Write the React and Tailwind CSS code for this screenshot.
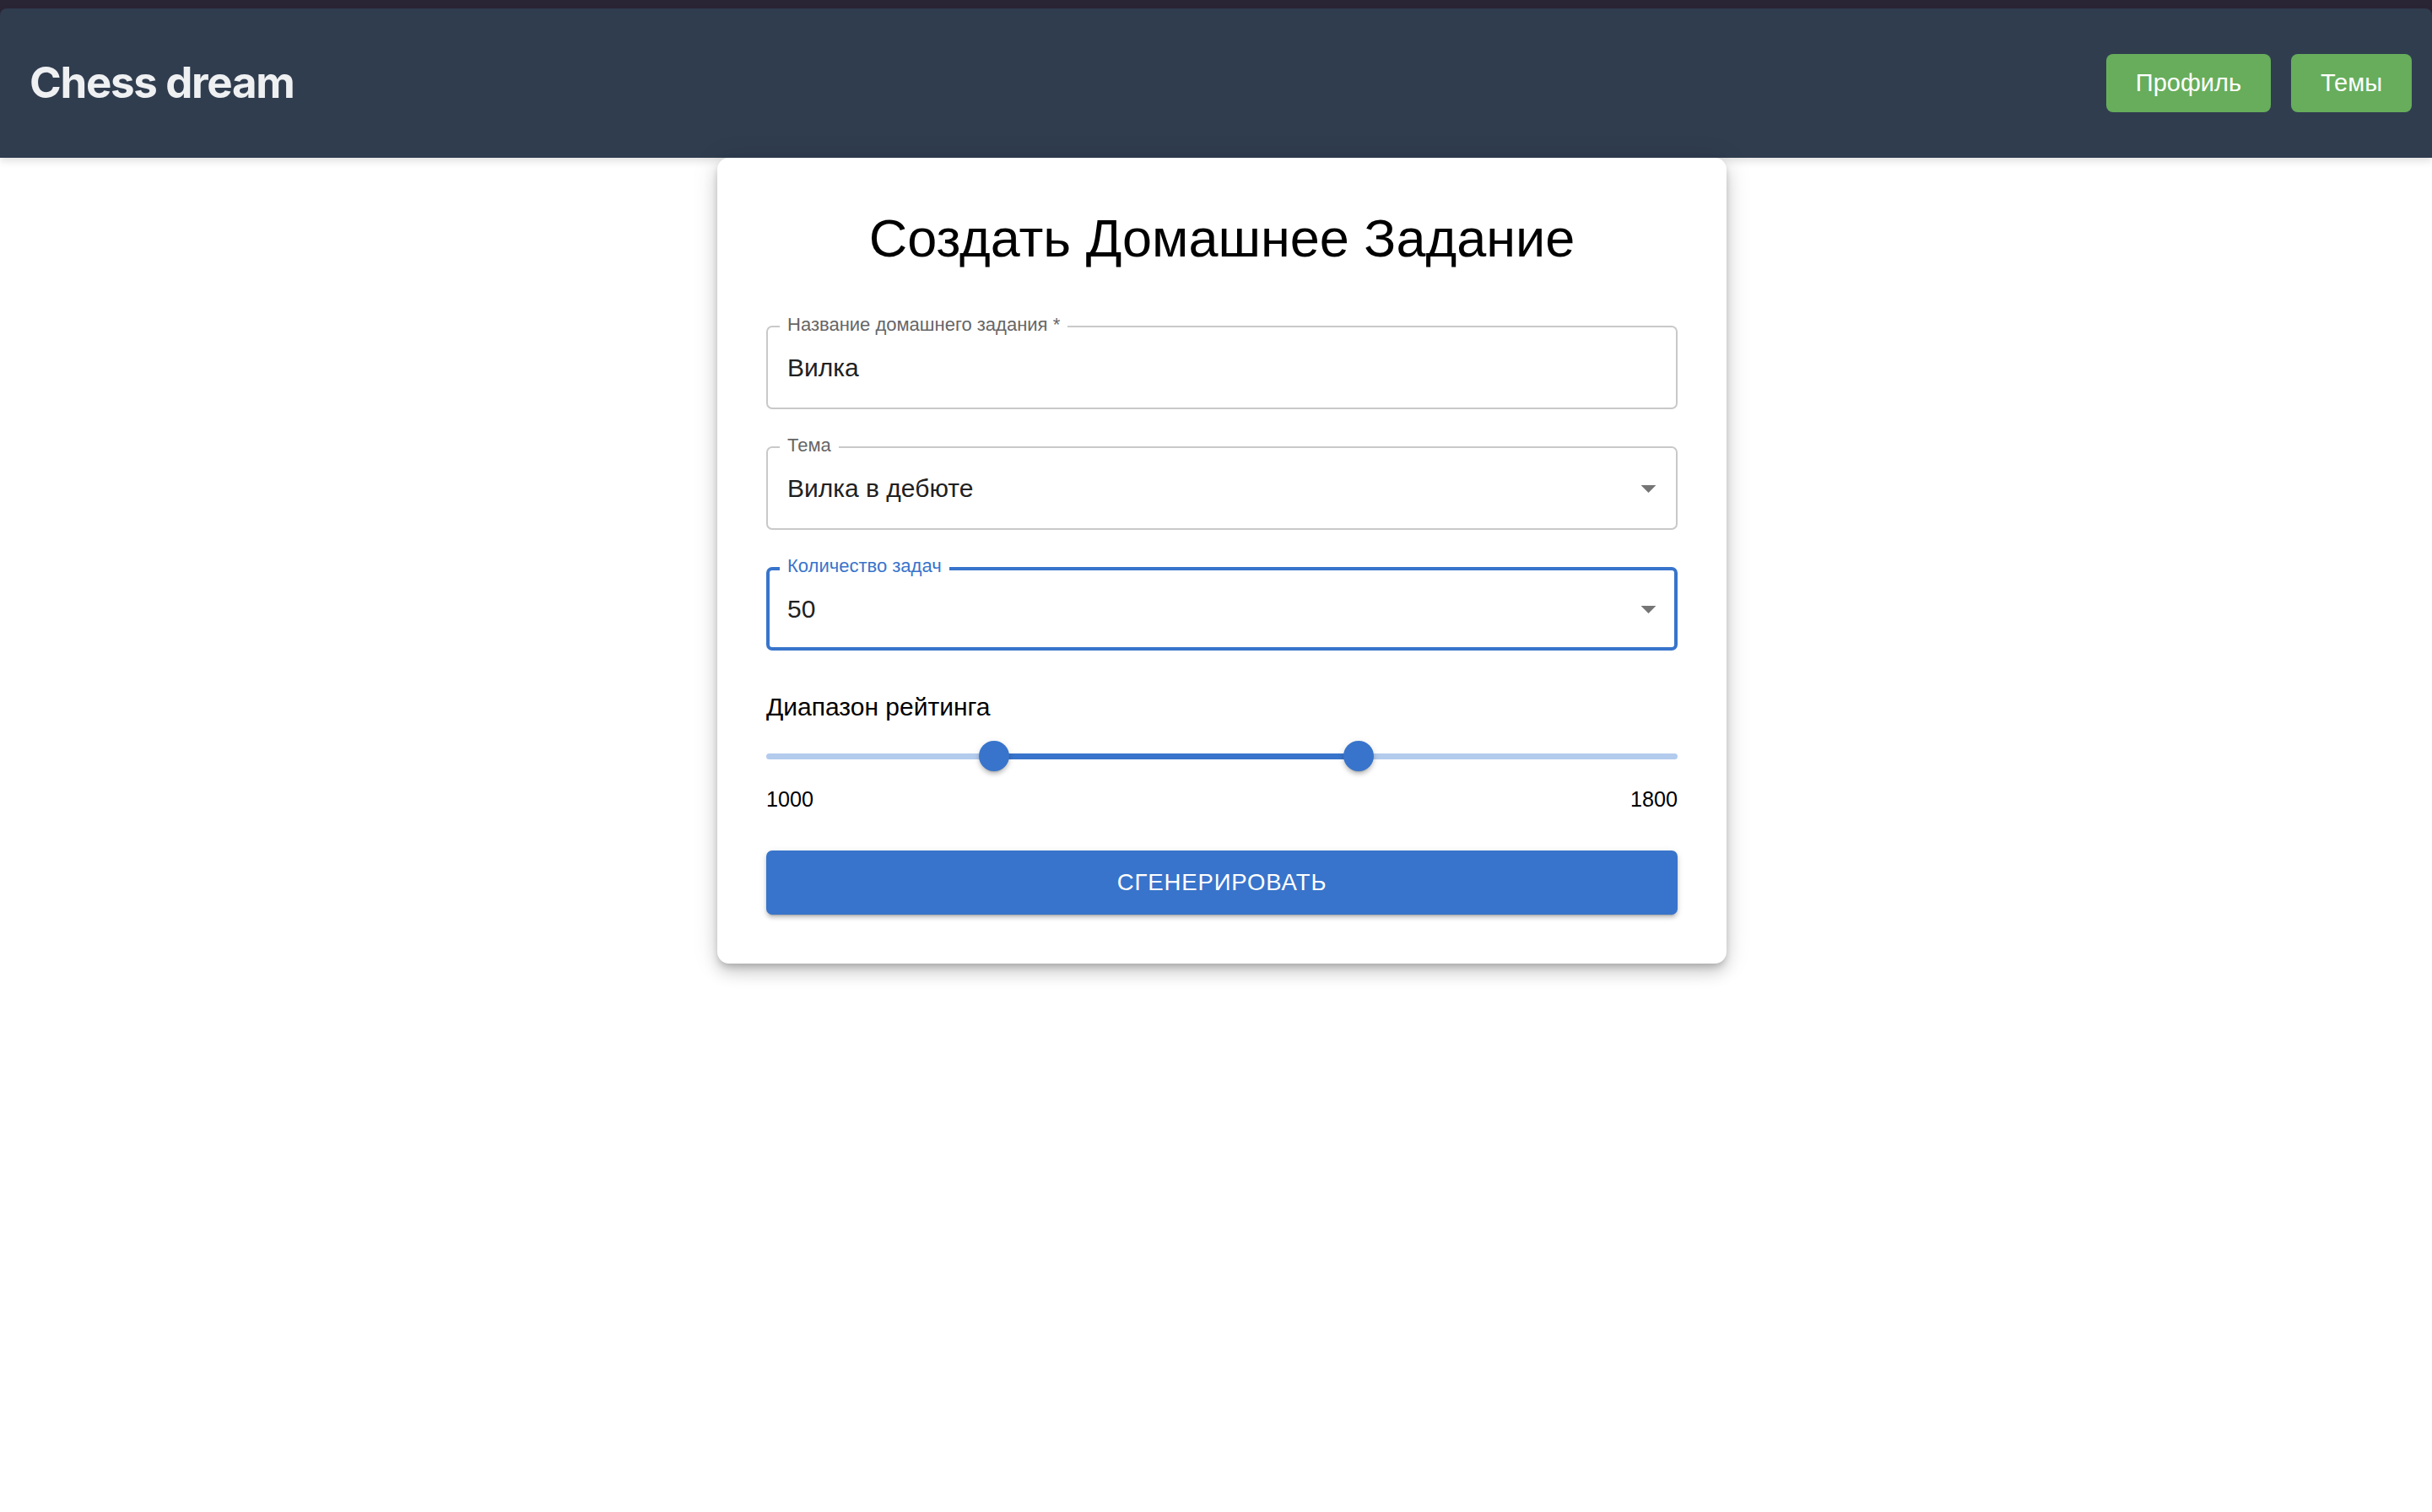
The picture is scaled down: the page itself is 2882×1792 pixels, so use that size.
import { useState } from "react";

const MIN = 500;
const MAX = 2500;

const ArrowDrop = () => (
  <svg viewBox="0 0 24 24" className="w-[43px] h-[43px] shrink-0 fill-[#757575]">
    <path d="M7 10l5 5 5-5z" />
  </svg>
);

const OutlinedField = ({ label, value, select, focused }) => {
  const box = focused
    ? "border-[4px] border-[#3874cb] pl-[21px] pr-[9px]"
    : "border-2 border-[#c9c9c9] pl-[23px] pr-[11px]";
  const lbl = focused
    ? "top-[-17px] left-[12px] text-[#3874cb]"
    : "top-[-15px] left-[14px] text-[#666666]";
  return (
    <div className={`relative h-[99px] rounded-[7px] flex items-center ${box}`}>
      <span className={`absolute bg-white px-[9px] text-[22px] leading-[24px] ${lbl}`}>
        {label}
      </span>
      <span className="flex-1 text-[30px] text-[#212121]">{value}</span>
      {select && <ArrowDrop />}
    </div>
  );
};

const RangeSlider = ({ values }) => {
  const pct = values.map((v) => ((v - MIN) / (MAX - MIN)) * 100);
  return (
    <div className="relative h-[54px] flex items-center">
      <div className="w-full h-[7px] rounded-full bg-[#b3cbed]" />
      <div
        className="absolute h-[7px] bg-[#3874cb]"
        style={{ left: `${pct[0]}%`, width: `${pct[1] - pct[0]}%` }}
      />
      {pct.map((p, i) => (
        <div
          key={i}
          className="absolute top-[9px] w-[36px] h-[36px] -ml-[18px] rounded-full bg-[#3874cb] shadow-[0_5px_2px_-4px_rgba(0,0,0,0.2),0_4px_4px_0_rgba(0,0,0,0.14),0_2px_9px_0_rgba(0,0,0,0.12)]"
          style={{ left: `${p}%` }}
        />
      ))}
    </div>
  );
};

const App = () => {
  const [range] = useState([1000, 1800]);

  return (
    <div className="min-h-screen bg-white font-['Liberation_Sans',Arial,sans-serif]">
      <div className="bg-[#2a2535] pt-[10px]">
        <header className="h-[177px] bg-[#303d4f] rounded-t-[8px] flex items-center justify-between pl-[35px] pr-[24px] shadow-[0_4px_10px_rgba(0,0,0,0.12)]">
          <h1 className="text-[51px] font-bold tracking-[-1.3px] text-[#eef0f2] font-['Inter',sans-serif]">
            Chess dream
          </h1>
          <div className="flex gap-[24px]">
            <button className="h-[69px] px-[35px] rounded-[8px] bg-[#67ad5b] text-white text-[29px]">
              Профиль
            </button>
            <button className="h-[69px] px-[35px] rounded-[8px] bg-[#67ad5b] text-white text-[29px]">
              Темы
            </button>
          </div>
        </header>
      </div>

      <main className="flex justify-center pl-[14px]">
        <div className="w-[1196px] bg-white rounded-[14px] p-[58px] shadow-[0_5px_9px_-2px_rgba(0,0,0,0.2),0_11px_18px_0_rgba(0,0,0,0.14),0_2px_32px_0_rgba(0,0,0,0.12)]">
          <h2 className="text-center text-[63px] leading-[75px] text-black mb-[66px]">
            Создать Домашнее Задание
          </h2>

          <div className="flex flex-col gap-[44px]">
            <OutlinedField label="Название домашнего задания *" value="Вилка" />
            <OutlinedField label="Тема" value="Вилка в дебюте" select />
            <OutlinedField label="Количество задач" value="50" select focused />
          </div>

          <p className="mt-[45px] text-[30px] leading-[43px] text-black">
            Диапазон рейтинга
          </p>
          <div className="mt-[10px]">
            <RangeSlider values={range} />
          </div>
          <div className="mt-[6px] flex justify-between text-[25.2px] leading-[36px] text-black">
            <span>{range[0]}</span>
            <span>{range[1]}</span>
          </div>

          <button className="mt-[43px] w-full h-[76px] rounded-[7px] bg-[#3874cb] text-white text-[27.5px] uppercase tracking-[0.9px] shadow-[0_5px_2px_-4px_rgba(0,0,0,0.2),0_4px_4px_0_rgba(0,0,0,0.14),0_2px_9px_0_rgba(0,0,0,0.12)]">
            Сгенерировать
          </button>
        </div>
      </main>
    </div>
  );
};

export default App;
